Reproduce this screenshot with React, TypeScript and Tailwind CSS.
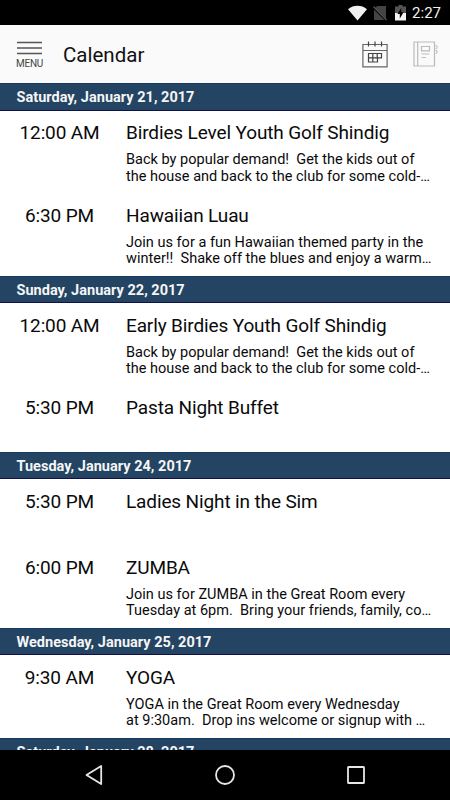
type CalendarEvent = {
  time: string;
  title: string;
  lines?: string[];
};

type Day = {
  date: string;
  events: CalendarEvent[];
};

const birdies = [
  "Back by popular demand!  Get the kids out of",
  "the house and back to the club for some cold-…",
];

const days: Day[] = [
  {
    date: "Saturday, January 21, 2017",
    events: [
      { time: "12:00 AM", title: "Birdies Level Youth Golf Shindig", lines: birdies },
      {
        time: "6:30 PM",
        title: "Hawaiian Luau",
        lines: [
          "Join us for a fun Hawaiian themed party in the",
          "winter!!  Shake off the blues and enjoy a warm…",
        ],
      },
    ],
  },
  {
    date: "Sunday, January 22, 2017",
    events: [
      { time: "12:00 AM", title: "Early Birdies Youth Golf Shindig", lines: birdies },
      { time: "5:30 PM", title: "Pasta Night Buffet" },
    ],
  },
  {
    date: "Tuesday, January 24, 2017",
    events: [
      { time: "5:30 PM", title: "Ladies Night in the Sim" },
      {
        time: "6:00 PM",
        title: "ZUMBA",
        lines: [
          "Join us for ZUMBA in the Great Room every",
          "Tuesday at 6pm.  Bring your friends, family, co…",
        ],
      },
    ],
  },
  {
    date: "Wednesday, January 25, 2017",
    events: [
      {
        time: "9:30 AM",
        title: "YOGA",
        lines: [
          "YOGA in the Great Room every Wednesday",
          "at 9:30am.  Drop ins welcome or signup with …",
        ],
      },
    ],
  },
  { date: "Saturday, January 28, 2017", events: [] },
];

function StatusBar() {
  return (
    <div className="flex h-[25px] shrink-0 items-center justify-end bg-black pr-[9px]">
      <svg className="mr-[6px] h-4 w-[19px]" viewBox="0 0 19 16">
        <path d="M0 4.2C5.5-.4 13.5-.4 19 4.2L9.5 15.6Z" fill="#f1f1f1" />
      </svg>
      <svg className="mr-[8px] h-4 w-[14px]" viewBox="0 0 14 16">
        <path d="M4.5 1H13v12.5L2 2.8ZM1 4.5 11.5 15H1Z" fill="#444" />
        <path d="M.5 1.5 13.5 15" stroke="#555" strokeWidth="1.2" />
      </svg>
      <svg className="mr-[6px] h-4 w-[11px]" viewBox="0 0 11 16">
        <path d="M3.5 0h4v1.5H11V8H0V1.5h3.5Z" fill="#555" />
        <path d="M0 8h11v7.5H0Z" fill="#f4f4f4" />
        <path d="M6.3 3 2.4 9h2.4v4.4L8.6 7.3H6.3Z" fill="#000" />
      </svg>
      <span className="pt-[2px] text-[15px] leading-[25px] text-[#f2f2f2]">2:27</span>
    </div>
  );
}

function CalendarIcon() {
  return (
    <svg className="h-[27px] w-[26px]" viewBox="0 0 26 27" fill="none" stroke="#666">
      <path d="M.9 3.5h24.2v22.3H.9ZM.9 9.5h24.2" strokeWidth="1.2" />
      <path d="M6.5.5v5M13 .5v5M19.5.5v5" stroke="#444" strokeWidth="1.2" />
      <path d="M6.5 12.5h13v4.3h-4v4.2h-9ZM6.5 16.8h9M10.8 12.5V21M15.2 12.5v4.3" stroke="#444" strokeWidth="1.2" />
    </svg>
  );
}

function NotebookIcon() {
  return (
    <svg className="h-[26px] w-[25px]" viewBox="0 0 25 26" fill="none" stroke="#bbb">
      <path d="M1 1h20.5v24H1ZM4.7 1v24" strokeWidth="1.2" />
      <path d="M8.5 5.5h8v4.3h-8ZM8.5 13h8M8.5 16.5h4.3" strokeWidth="1.2" />
      <path d="M22.5 4.8h1.5v2.6h-1.5M22.5 9.5h1.5v2.6h-1.5" strokeWidth="1" />
    </svg>
  );
}

function Header() {
  return (
    <header className="flex h-[58.25px] shrink-0 items-center bg-[#fafafa] pr-[12px] pl-4">
      <button className="flex w-[27px] flex-col items-center pt-[2px]">
        <svg className="h-[14px] w-[25px]" viewBox="0 0 25 14" stroke="#555" strokeWidth="1.7">
          <path d="M0 1.5h25M0 7h25M0 12.5h25" />
        </svg>
        <span className="mt-[3px] text-[10px] leading-[12px] tracking-[-0.2px] text-[#444]">MENU</span>
      </button>
      <h1 className="ml-5 flex-1 pt-[2px] text-[20.5px] leading-6 text-[#111]">Calendar</h1>
      <div className="flex items-center gap-[25px]">
        <CalendarIcon />
        <NotebookIcon />
      </div>
    </header>
  );
}

function EventRow({ event }: { event: CalendarEvent }) {
  return (
    <div className={`flex pt-[10.25px] ${event.lines ? "h-[82.5px]" : "h-[66px]"}`}>
      <div className="w-[119px] text-center text-[19px] leading-6 tracking-[-0.15px]">{event.time}</div>
      <div className="flex-1 pl-[7px]">
        <h3 className="text-[19px] leading-6 tracking-[-0.13px]">{event.title}</h3>
        {event.lines && (
          <p className="mt-[7px] text-[14.5px] leading-[16.5px] tracking-[0.01px] whitespace-pre">
            {event.lines.join("\n")}
          </p>
        )}
      </div>
    </div>
  );
}

function NavBar() {
  return (
    <nav className="flex h-[50px] shrink-0 items-center bg-black pl-[84px]">
      <svg className="h-[22px] w-5" viewBox="0 0 20 22" fill="none" stroke="#e6e6e6">
        <path d="M17.2 2v18L2.5 11Z" strokeWidth="1.8" strokeLinejoin="round" />
      </svg>
      <svg className="ml-[110px] h-[22px] w-[22px]" viewBox="0 0 22 22" fill="none" stroke="#e6e6e6">
        <circle cx="11" cy="11" r="9" strokeWidth="1.8" />
      </svg>
      <svg className="ml-[110px] h-5 w-5" viewBox="0 0 20 20" fill="none" stroke="#e6e6e6">
        <rect x="2" y="2" width="16" height="16" rx="0.6" strokeWidth="1.8" />
      </svg>
    </nav>
  );
}

export default function App() {
  return (
    <div className="flex h-[800px] w-[450px] flex-col overflow-hidden bg-white font-[Roboto,sans-serif] text-[#0a0a0a]">
      <StatusBar />
      <Header />
      <main className="min-h-0 flex-1 overflow-hidden">
        {days.map((day) => (
          <section key={day.date}>
            <h2 className="h-[27.5px] border-y border-t-[#15395f] border-b-[#10104a] bg-[#234462] pl-[16.5px] text-[14.5px] leading-[28.5px] font-bold tracking-[0.02px] text-[#f5f5f5]">
              {day.date}
            </h2>
            {day.events.map((event) => (
              <EventRow key={event.title} event={event} />
            ))}
          </section>
        ))}
      </main>
      <NavBar />
    </div>
  );
}
